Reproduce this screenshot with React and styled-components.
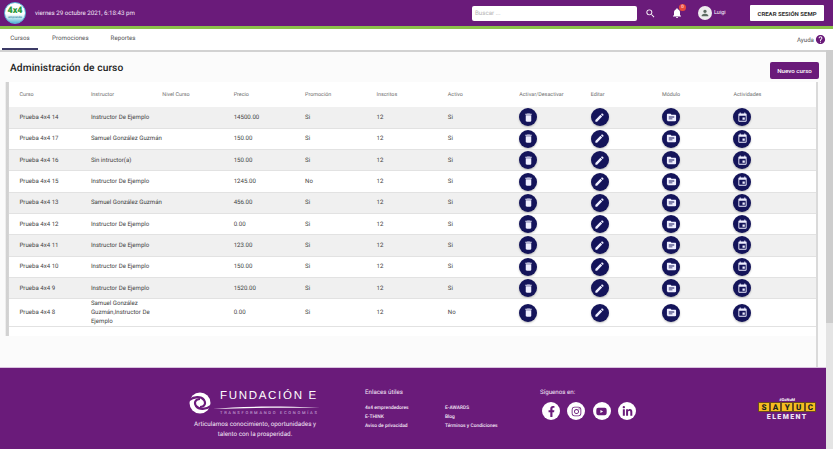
import styled, { createGlobalStyle } from "styled-components";
import {
  MdDelete,
  MdEdit,
  MdTopic,
  MdEvent,
  MdSearch,
  MdNotifications,
  MdHelp,
  MdPerson,
} from "react-icons/md";
import { FaFacebookF, FaInstagram, FaYoutube, FaLinkedinIn } from "react-icons/fa";

const PURPLE = "#6a1b7a";
const NAVY = "#14145a";

const GlobalStyle = createGlobalStyle`
  * { box-sizing: border-box; }
  html, body { margin: 0; padding: 0; height: 100%; overflow: hidden; }
  body {
    font-family: Roboto, "Liberation Sans", sans-serif;
    background: #fafafa;
    color: #333;
    text-rendering: geometricPrecision;
  }
`;

const Page = styled.div`
  width: 833px;
  height: 449px;
  display: flex;
  flex-direction: column;
  overflow: hidden;
`;

const Header = styled.header`
  height: 29px;
  flex: none;
  display: flex;
  align-items: center;
  background: ${PURPLE};
  border-bottom: 3px solid #8bc34a;
  padding: 0 9px 0 4px;
`;

const LogoBadge = styled.div`
  width: 22px;
  height: 22px;
  border-radius: 50%;
  background: linear-gradient(#fff 55%, #bfe6ef 75%, #5bb8d8);
  border: 1.5px solid #5bb8d8;
  display: flex;
  flex-direction: column;
  align-items: center;
  justify-content: center;
  font-weight: 900;
  font-size: 9px;
  line-height: 8px;
  color: #2e9a3a;
  small {
    font-size: 3px;
    line-height: 4px;
    font-weight: 500;
    color: #2a7d9c;
  }
`;

const DateText = styled.span`
  margin-left: 9px;
  color: #f3e6f6;
  font-size: 6.2px;
  flex: 1;
`;

const SearchInput = styled.div`
  width: 165px;
  height: 15px;
  background: #fff;
  border-radius: 2px;
  padding-left: 3px;
  font-size: 6.2px;
  line-height: 15px;
  color: #b5b5b5;
`;

const HeaderIcon = styled.div`
  color: #fff;
  display: flex;
  margin-left: ${(p) => p.$gap}px;
  position: relative;
  font-size: ${(p) => p.$size}px;
`;

const Badge = styled.span`
  position: absolute;
  top: -3px;
  right: -3px;
  width: 7px;
  height: 7px;
  border-radius: 50%;
  background: #e8483c;
  color: #fff;
  font-size: 4.5px;
  line-height: 7px;
  text-align: center;
`;

const Avatar = styled.div`
  width: 14px;
  height: 14px;
  margin-left: 15px;
  border-radius: 50%;
  background: #eee;
  color: #5c6b60;
  display: flex;
  align-items: center;
  justify-content: center;
  font-size: 10px;
`;

const UserName = styled.span`
  margin-left: 2px;
  width: 36px;
  color: #fff;
  font-size: 5.5px;
`;

const SessionButton = styled.button`
  width: 74px;
  height: 16px;
  border: 0;
  padding: 0;
  border-radius: 1px;
  background: #fff;
  color: #333;
  font-family: inherit;
  font-weight: 700;
  font-size: 6px;
`;

const Tabs = styled.nav`
  height: 21px;
  flex: none;
  display: flex;
  background: #fff;
  padding-left: 2px;
`;

const Tab = styled.a`
  height: 21px;
  padding: 0 8px;
  margin-right: 6px;
  min-width: 36px;
  text-align: center;
  font-size: 6.2px;
  line-height: 19px;
  color: #555;
  border-bottom: 2px solid ${(p) => (p.$active ? "#3c3a66" : "transparent")};
`;

const Help = styled.div`
  margin-left: auto;
  padding-right: 7px;
  display: flex;
  align-items: center;
  gap: 1px;
  font-size: 6.2px;
  color: #555;
  svg {
    font-size: 11px;
    color: ${PURPLE};
  }
`;

const Body = styled.div`
  flex: 1;
  display: flex;
  min-height: 0;
`;

const Scrollbar = styled.div`
  width: 7px;
  flex: none;
  background: #e4e4e4;
`;

const ScrollThumb = styled.div`
  height: 273px;
  background: #cdcdcd;
`;

const Main = styled.div`
  flex: 1;
  display: flex;
  flex-direction: column;
  min-width: 0;
  border-top: 2px solid #d2d2d2;
`;

const Content = styled.main`
  height: 315px;
  flex: none;
  overflow: hidden;
  background: #fbfbfb;
`;

const TitleRow = styled.div`
  height: 30px;
  display: flex;
  align-items: center;
  justify-content: space-between;
  padding: 6px 7px 0 10px;
`;

const Title = styled.h1`
  margin: -3px 0 0;
  font-size: 10.2px;
  font-weight: 500;
  letter-spacing: 0.1px;
  color: #222;
`;

const NewButton = styled.button`
  width: 49px;
  height: 17px;
  margin-top: 1px;
  border: 0;
  padding: 0;
  border-radius: 2px;
  background: ${PURPLE};
  color: #fff;
  font-family: inherit;
  font-size: 6.2px;
  font-weight: 500;
`;

const Card = styled.section`
  position: relative;
  width: 807px;
  height: 254px;
  margin-left: 9px;
  background: #fff;
  /* sombra izquierda corta, derecha hasta el footer */
  &::before {
    content: "";
    position: absolute;
    top: 0;
    left: -4px;
    width: 4px;
    height: 254px;
    background: linear-gradient(90deg, #fbfbfb, #cfcfcf 40%, #d6d6d6);
  }
  &::after {
    content: "";
    position: absolute;
    top: 0;
    left: 100%;
    width: 2px;
    height: 285px;
    background: #dadada;
  }
`;

const Table = styled.table`
  width: 100%;
  table-layout: fixed;
  border-collapse: collapse;
`;

const HeadCell = styled.th`
  width: 71.4px;
  height: 25px;
  padding: 0 0 0 10.5px;
  text-align: left;
  font-size: 5.4px;
  font-weight: 400;
  color: #6e6e6e;
  &:last-child {
    width: auto;
  }
`;

const Row = styled.tr`
  background: ${(p) => (p.$odd ? "#f0f0f0" : "#fff")};
  border-bottom: 1px solid #e2e2e2;
  height: ${(p) => (p.$tall ? 27 : 21.3)}px;
`;

const Cell = styled.td`
  padding: 0 4px 0 10.5px;
  font-size: 6.1px;
  line-height: 9px;
  color: #444;
`;

const TeacherName = styled.div`
  width: 68px;
  white-space: ${(p) => (p.$wrap ? "normal" : "nowrap")};
`;

const ActionButton = styled.span`
  width: 18px;
  height: 18px;
  border-radius: 50%;
  background: ${NAVY};
  color: #eef;
  display: flex;
  align-items: center;
  justify-content: center;
  font-size: 11px;
  box-shadow: 0 1px 2px rgba(0, 0, 0, 0.25);
`;

const Footer = styled.footer`
  flex: 1;
  display: flex;
  background: ${PURPLE};
  border-top: 1px solid #d9c3df;
  color: #f3e6f6;
  padding: 19px 0 0 188px;
`;

const Brand = styled.div`
  width: 134px;
  margin-right: 43px;
`;

const BrandTop = styled.div`
  display: flex;
  gap: 9px;
  svg {
    flex: none;
  }
`;

const SwirlWrap = styled.div`
  margin: 5px 0 0 1px;
  display: flex;
`;

const BrandText = styled.div`
  padding-top: 2px;
`;

const BrandName = styled.div`
  font-family: "Liberation Sans", sans-serif;
  font-size: 11.5px;
  line-height: 15px;
  letter-spacing: 1.7px;
  color: #fff;
  white-space: nowrap;
`;

const SwooshWrap = styled.div`
  margin: 2px 0 1px -7px;
  height: 3px;
  display: flex;
`;

const BrandSub = styled.div`
  font-size: 4px;
  letter-spacing: 1.75px;
  line-height: 6px;
  white-space: nowrap;
  color: #d9bfe0;
`;

const Tagline = styled.p`
  margin: 4px 0 0 4px;
  width: 126px;
  text-align: center;
  font-size: 6.3px;
  line-height: 9.5px;
`;

const LinksBlock = styled.div`
  width: 175px;
`;

const FooterHeading = styled.div`
  font-size: 6.2px;
  line-height: 10px;
`;

const LinkGrid = styled.div`
  display: grid;
  grid-template-columns: 80px 1fr;
  margin-top: 7px;
  font-size: 4.9px;
  line-height: 9px;
  font-weight: 500;
`;

const SocialRow = styled.div`
  display: flex;
  gap: 7.4px;
  margin-top: 5px;
  margin-left: 2px;
`;

const SocialIcon = styled.span`
  width: 18px;
  height: 18px;
  border-radius: 50%;
  background: #fff;
  color: ${PURPLE};
  display: flex;
  align-items: center;
  justify-content: center;
  font-size: 11px;
`;

const Sayuc = styled.div`
  margin-left: 122px;
  margin-top: 10px;
  width: 58px;
  display: flex;
  flex-direction: column;
  align-items: center;
`;

const SayucTop = styled.div`
  font-size: 4px;
  line-height: 5px;
  font-weight: 700;
  color: #fff;
`;

const SayucTiles = styled.div`
  display: flex;
`;

const SayucTile = styled.span`
  width: 11.6px;
  height: 10px;
  background: #f5bd1f;
  border: 0.5px solid #6a4a20;
  color: #222;
  font-size: 8px;
  font-weight: 900;
  line-height: 9px;
  text-align: center;
`;

const SayucBottom = styled.div`
  font-size: 7px;
  line-height: 10px;
  font-weight: 900;
  letter-spacing: 1.4px;
  color: #f1e6f4;
`;

const columns = [
  "Curso",
  "Instructor",
  "Nivel Curso",
  "Precio",
  "Promoción",
  "Inscritos",
  "Activo",
  "Activar/Desactivar",
  "Editar",
  "Módulo",
  "Actividades",
];

const EJEMPLO = "Instructor De Ejemplo";
const SAMUEL = "Samuel González Guzmán";

const courses = [
  ["Prueba 4x4 14", EJEMPLO, "14500.00", "Si", "Si"],
  ["Prueba 4x4 17", SAMUEL, "150.00", "Si", "Si"],
  ["Prueba 4x4 16", "Sin intructor(a)", "150.00", "Si", "Si"],
  ["Prueba 4x4 15", EJEMPLO, "1245.00", "No", "Si"],
  ["Prueba 4x4 13", SAMUEL, "456.00", "Si", "Si"],
  ["Prueba 4x4 12", EJEMPLO, "0.00", "Si", "Si"],
  ["Prueba 4x4 11", EJEMPLO, "123.00", "Si", "Si"],
  ["Prueba 4x4 10", EJEMPLO, "150.00", "Si", "Si"],
  ["Prueba 4x4 9", EJEMPLO, "1520.00", "Si", "Si"],
  ["Prueba 4x4 8", "Samuel González Guzmán,Instructor De Ejemplo", "0.00", "Si", "No"],
];

const actions = [MdDelete, MdEdit, MdTopic, MdEvent];
const socials = [FaFacebookF, FaInstagram, FaYoutube, FaLinkedinIn];

function Swirl() {
  const band = "M-1 9C5 4 12 4 15 8c2 3 1 7-4 7";
  return (
    <svg width="22" height="22" viewBox="0 0 22 22">
      <circle cx="11" cy="11" r="10.5" fill="#fff" />
      <path d={band} fill="none" stroke={PURPLE} strokeWidth="2.2" />
      <path d={band} fill="none" stroke={PURPLE} strokeWidth="2.2" transform="rotate(180 11 11)" />
      <circle cx="11" cy="11" r="1.4" fill="#fff" />
    </svg>
  );
}

function Swoosh() {
  return (
    <svg width="107" height="3" viewBox="0 0 107 3">
      <path d="M0 3C25 .5 60-.5 107 2 70 1.2 35 1.8 0 3z" fill="#fff" />
    </svg>
  );
}

export default function App() {
  return (
    <Page>
      <GlobalStyle />
      <Header>
        <LogoBadge>
          4x4
          <small>emprende</small>
        </LogoBadge>
        <DateText>viernes 29 octubre 2021, 6:18:43 pm</DateText>
        <SearchInput>Buscar ...</SearchInput>
        <HeaderIcon $gap={8} $size={11}>
          <MdSearch />
        </HeaderIcon>
        <HeaderIcon $gap={15} $size={12}>
          <MdNotifications />
          <Badge>0</Badge>
        </HeaderIcon>
        <Avatar>
          <MdPerson />
        </Avatar>
        <UserName>Luigi</UserName>
        <SessionButton>CREAR SESIÓN SEMP</SessionButton>
      </Header>
      <Tabs>
        <Tab $active>Cursos</Tab>
        <Tab>Promociones</Tab>
        <Tab>Reportes</Tab>
        <Help>
          Ayuda
          <MdHelp />
        </Help>
      </Tabs>
      <Body>
        <Main>
          <Content>
            <TitleRow>
              <Title>Administración de curso</Title>
              <NewButton>Nuevo curso</NewButton>
            </TitleRow>
            <Card>
              <Table>
                <thead>
                  <tr>
                    {columns.map((c) => (
                      <HeadCell key={c}>{c}</HeadCell>
                    ))}
                  </tr>
                </thead>
                <tbody>
                  {courses.map(([name, teacher, price, promo, active], i) => (
                    <Row key={name} $odd={i % 2 === 0} $tall={i === 9}>
                      <Cell>{name}</Cell>
                      <Cell colSpan={2}>
                        <TeacherName $wrap={i === 9}>{teacher}</TeacherName>
                      </Cell>
                      <Cell>{price}</Cell>
                      <Cell>{promo}</Cell>
                      <Cell>12</Cell>
                      <Cell>{active}</Cell>
                      {actions.map((Icon, k) => (
                        <Cell key={k}>
                          <ActionButton>
                            <Icon />
                          </ActionButton>
                        </Cell>
                      ))}
                    </Row>
                  ))}
                </tbody>
              </Table>
            </Card>
          </Content>
          <Footer>
            <Brand>
              <BrandTop>
                <SwirlWrap>
                  <Swirl />
                </SwirlWrap>
                <BrandText>
                  <BrandName>FUNDACIÓN E</BrandName>
                  <SwooshWrap>
                    <Swoosh />
                  </SwooshWrap>
                  <BrandSub>TRANSFORMANDO ECONOMÍAS</BrandSub>
                </BrandText>
              </BrandTop>
              <Tagline>Articulamos conocimiento, oportunidades y talento con la prosperidad.</Tagline>
            </Brand>
            <LinksBlock>
              <FooterHeading>Enlaces útiles</FooterHeading>
              <LinkGrid>
                <span>4x4 emprendedores</span>
                <span>E-AWARDS</span>
                <span>E-THINK</span>
                <span>Blog</span>
                <span>Aviso de privacidad</span>
                <span>Términos y Condiciones</span>
              </LinkGrid>
            </LinksBlock>
            <div>
              <FooterHeading>Síguenos en:</FooterHeading>
              <SocialRow>
                {socials.map((Icon, i) => (
                  <SocialIcon key={i}>
                    <Icon />
                  </SocialIcon>
                ))}
              </SocialRow>
            </div>
            <Sayuc>
              <SayucTop>#GoNuM</SayucTop>
              <SayucTiles>
                {["S", "A", "Y", "U", "C"].map((l) => (
                  <SayucTile key={l}>{l}</SayucTile>
                ))}
              </SayucTiles>
              <SayucBottom>ELEMENT</SayucBottom>
            </Sayuc>
          </Footer>
        </Main>
        <Scrollbar>
          <ScrollThumb />
        </Scrollbar>
      </Body>
    </Page>
  );
}
